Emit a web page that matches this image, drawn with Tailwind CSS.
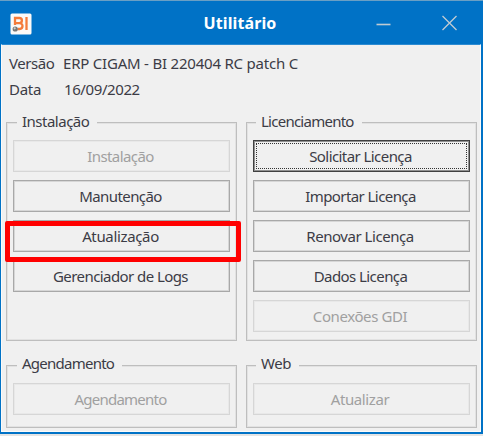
<!DOCTYPE html>
<html lang="pt-BR">
<head>
<meta charset="utf-8">
<title>Utilitário</title>
<script src="https://cdn.jsdelivr.net/npm/@tailwindcss/browser@4"></script>
</head>
<body class="w-[483px] h-[436px] overflow-hidden bg-[#e4e4e4] font-['Noto_Sans',sans-serif] text-[15px] text-[#3c3c46]">
<div class="flex flex-col w-[483px] h-[434px] border-t border-t-[#6a9fc4] bg-[#0072c6]">
  <header class="h-[43px] shrink-0 grid grid-cols-[80px_1fr_80px] items-center text-white">
    <svg class="ml-[10px] mt-[2px]" width="22" height="22" viewBox="0 0 22 22">
      <rect x="0.5" y="0.5" width="21" height="21" rx="1.5" fill="#fbfaf8"/>
      <path d="M5 12V5h4.300a2.400 2.400 0 0 1 0 5.200H6M9 10.200h.6a2.900 2.900 0 0 1 0 5.800H7.500M16.500 4v13" fill="none" stroke="#f47b3a" stroke-width="2.3"/>
      <circle cx="5.200" cy="16" r="2.600" fill="#777"/><circle cx="4.700" cy="15.300" r="1.100" fill="#d0d0d0"/>
    </svg>
    <h1 class="text-center font-bold text-[16px] tracking-[0.1px] pr-[3px] pt-[1px]">Utilitário</h1>
    <svg class="-ml-[27px] mt-[1px]" width="82" height="16" viewBox="0 0 82 16" fill="none" stroke="#c0cbd2">
      <path d="M0.5 9.500h14" stroke-width="1.600"/><path d="M66.500 1l14 14M80.500 1l-14 14" stroke-width="1.300"/>
    </svg>
  </header>
  <main class="flex-1 ml-[1px] mr-[2px] mb-[2px] bg-[#f0f0f0] border border-[#fafafa] border-t-[#2c8bd2] px-[4px]">
    <div class="grid grid-cols-[54px_1fr] content-start pl-[3px] pt-[5px] leading-[26px] h-[77px]">
      <span class="tracking-[-0.45px]">Versão</span><span class="tracking-[-0.21px]">ERP CIGAM - BI 220404 RC patch C</span>
      <span class="tracking-[-0.3px]">Data</span><span class="pl-[1px] tracking-[-0.4px]">16/09/2022</span>
    </div>
    <div class="grid grid-cols-2 gap-x-[9px] w-[471px]">
      <section class="relative h-[219px] border border-[#bebebe] shadow-[inset_0_0_0_1px_#e2e2e2] pt-[17px] px-[6px] flex flex-col gap-[8px] tracking-[-0.57px]">
        <h2 class="absolute left-[10px] -top-[13px] bg-[#f0f0f0] pl-[5px] pr-[8px] leading-[22px] tracking-[-0.5px]">Instalação</h2>
        <button disabled class="h-[32px] shrink-0 border border-[#d6d6d6] shadow-[inset_0_0_0_1px_#e8e8e8] pr-[2px] text-[#a0a0a0]">Instalação</button>
        <button class="h-[32px] shrink-0 border border-[#a8a8a8] shadow-[inset_0_0_0_1px_#d6d6d6] pr-[2px]">Manutenção</button>
        <button class="relative h-[32px] shrink-0 border border-[#a8a8a8] shadow-[inset_0_0_0_1px_#d6d6d6] pr-[2px] tracking-[-0.35px]">Atualização<i class="absolute -left-[9px] top-0 w-[236px] h-[41px] border-[5px] border-[#ff0000] rounded-[2px]"></i></button>
        <button class="h-[32px] shrink-0 border border-[#a8a8a8] shadow-[inset_0_0_0_1px_#d6d6d6] pr-[2px]">Gerenciador de Logs</button>
      </section>
      <section class="relative h-[219px] border border-[#bebebe] shadow-[inset_0_0_0_1px_#e2e2e2] pt-[17px] px-[6px] flex flex-col gap-[8px] tracking-[-0.57px]">
        <h2 class="absolute left-[9px] -top-[13px] bg-[#f0f0f0] pl-[5px] pr-[8px] leading-[22px] tracking-[-0.75px]">Licenciamento</h2>
        <button class="h-[32px] shrink-0 border border-[#404040] shadow-[inset_0_0_0_1px_#909090] p-[2px]"><span class="flex h-full items-center justify-center border border-dotted border-[#333] pr-[2px]">Solicitar Licença</span></button>
        <button class="h-[32px] shrink-0 border border-[#a8a8a8] shadow-[inset_0_0_0_1px_#d6d6d6] pr-[2px]">Importar Licença</button>
        <button class="h-[32px] shrink-0 border border-[#a8a8a8] shadow-[inset_0_0_0_1px_#d6d6d6] pr-[3px] tracking-[-0.45px]">Renovar Licença</button>
        <button class="h-[32px] shrink-0 border border-[#a8a8a8] shadow-[inset_0_0_0_1px_#d6d6d6] pr-[2px]">Dados Licença</button>
        <button disabled class="h-[32px] shrink-0 border border-[#d6d6d6] shadow-[inset_0_0_0_1px_#e8e8e8] pr-[3px] text-[#a0a0a0] tracking-[-0.4px]">Conexões GDI</button>
      </section>
      <section class="relative mt-[24px] h-[63px] border border-[#bebebe] shadow-[inset_0_0_0_1px_#e2e2e2] pt-[17px] px-[6px] flex flex-col tracking-[-0.75px]">
        <h2 class="absolute left-[10px] -top-[13px] bg-[#f0f0f0] pl-[5px] pr-[8px] leading-[20px]">Agendamento</h2>
        <button disabled class="h-[32px] shrink-0 border border-[#d6d6d6] shadow-[inset_0_0_0_1px_#e8e8e8] pr-[2px] text-[#a0a0a0]">Agendamento</button>
      </section>
      <section class="relative mt-[24px] h-[63px] border border-[#bebebe] shadow-[inset_0_0_0_1px_#e2e2e2] pt-[17px] px-[6px] flex flex-col tracking-[-0.4px]">
        <h2 class="absolute left-[9px] -top-[13px] bg-[#f0f0f0] pl-[5px] pr-[8px] leading-[20px]">Web</h2>
        <button disabled class="h-[32px] shrink-0 border border-[#d6d6d6] shadow-[inset_0_0_0_1px_#e8e8e8] pr-[3px] text-[#a0a0a0]">Atualizar</button>
      </section>
    </div>
  </main>
</div>
</body>
</html>
